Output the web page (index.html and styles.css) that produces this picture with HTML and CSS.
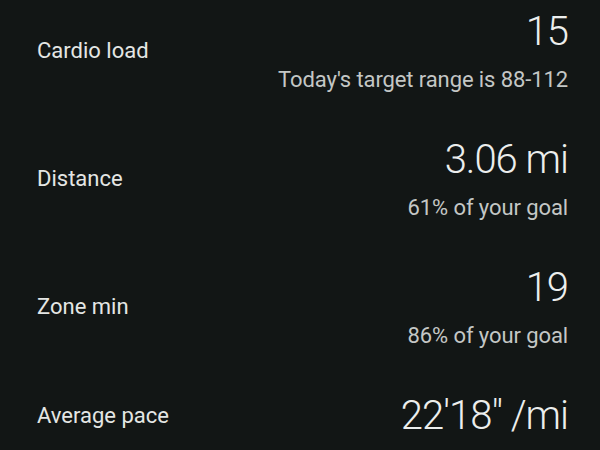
FILE: index.html
```html
<!DOCTYPE html>
<html>
<head>
<meta charset="utf-8">
<link rel="stylesheet" href="styles.css">
</head>
<body>
<main class="stats">
  <section class="row">
    <div class="label">Cardio load</div>
    <div class="value">
      <div class="num">15</div>
      <div class="sub">Today's target range is 88-112</div>
    </div>
  </section>
  <section class="row">
    <div class="label">Distance</div>
    <div class="value">
      <div class="num">3.06 mi</div>
      <div class="sub">61% of your goal</div>
    </div>
  </section>
  <section class="row">
    <div class="label">Zone min</div>
    <div class="value">
      <div class="num">19</div>
      <div class="sub">86% of your goal</div>
    </div>
  </section>
  <section class="row">
    <div class="label">Average pace</div>
    <div class="value">
      <div class="num">22'18" /mi</div>
    </div>
  </section>
</main>
</body>
</html>
```

FILE: styles.css
```css
html, body {
  margin: 0;
  padding: 0;
  background: #121615;
  height: 100%;
  overflow: hidden;
}
.stats {
  font-family: Roboto, "Noto Sans", sans-serif;
  padding: 8px 32px 0 37px;
  display: flex;
  flex-direction: column;
  gap: 42px;
}
.row {
  display: flex;
  align-items: center;
  justify-content: space-between;
}
.label {
  font-size: 22px;
  line-height: 28px;
  color: #e4e6e4;
}
.value {
  text-align: right;
  display: flex;
  flex-direction: column;
  gap: 10px;
}
.num {
  font-size: 40px;
  line-height: 48px;
  font-weight: 300;
  color: #eceeed;
  letter-spacing: -1px;
}
.sub {
  font-size: 22px;
  line-height: 28px;
  color: #c4c7c5;
  letter-spacing: -0.1px;
}
```
